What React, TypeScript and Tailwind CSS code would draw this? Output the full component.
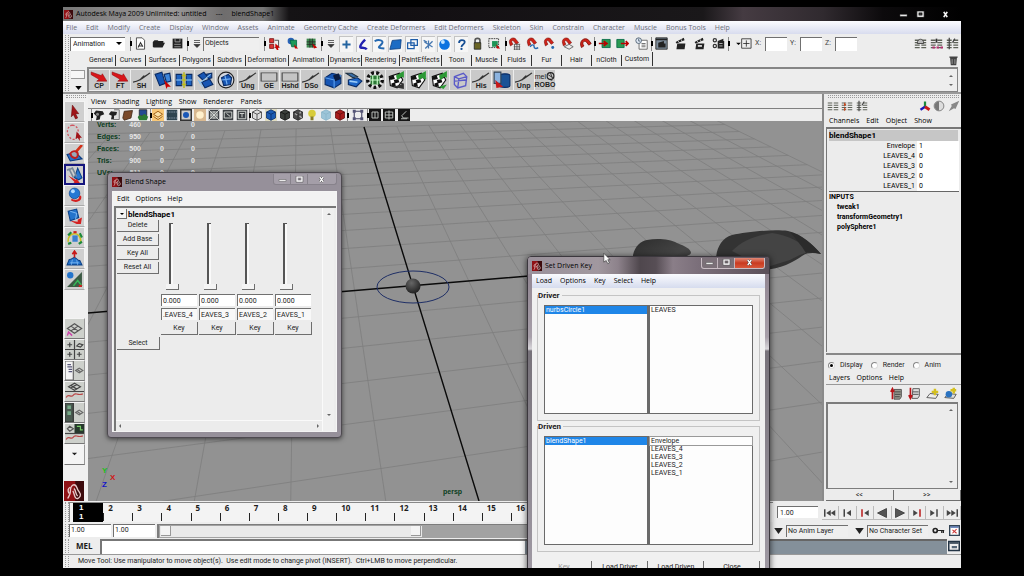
import React from "react";

type Kids = { children?: React.ReactNode };

const UI = "font-[Roboto,'Liberation_Sans',sans-serif] text-[7px] leading-[9px]";
const MENU = "font-['Open_Sans','Noto_Sans',sans-serif] text-[7px] leading-[10px]";
const INSET = "border-t border-l border-[#707070] border-b-0 border-r-0";
const RAISED = "border-r border-b border-[#6e6e6e]";

function Icon({ children, className = "size-[13px]" }: Kids & { className?: string }) {
  return (
    <svg viewBox="0 0 16 16" className={`block shrink-0 ${className}`} fill="none" aria-hidden="true">
      {children}
    </svg>
  );
}

function Tool({ label, children, className = "" }: Kids & { label: string; className?: string }) {
  return (
    <button type="button" aria-label={label} className={`flex items-center justify-center shrink-0 ${className}`}>
      {children}
    </button>
  );
}

function Sep() {
  return (
    <span className="flex h-[14px] w-px shrink-0 flex-col items-center justify-center bg-[#888]">
      <span className="h-[5px] w-[2px] shrink-0 bg-black" />
    </span>
  );
}

function Handle() {
  return <span className="my-[1px] w-[4px] shrink-0 self-stretch border-x border-dotted border-[#999]" />;
}

function MenuBar({ items, className = "" }: { items: string[]; className?: string }) {
  return (
    <nav className={`flex items-center whitespace-nowrap ${MENU} ${className}`}>
      {items.map((m) => (
        <button type="button" key={m}>{m}</button>
      ))}
    </nav>
  );
}

function MayaLogo({ className = "size-[11px]" }: { className?: string }) {
  return (
    <Icon className={className}>
      <rect width="16" height="16" fill="#8f1216" />
      <rect x="9" width="7" height="16" fill="#3c0a0c" />
      <path d="M3 14c1-2 2-3 2-5 0-3 1-6 3-6s2 2 3 4 3 3 2 5-3 3-4 1-1-4-2-5M5 5c-2 1-2 3-1 5M8 6c2 2 1 5 3 6" stroke="#e8caca" strokeWidth="1.1" />
    </Icon>
  );
}

/* ---------- status line icons ---------- */

const fileIcons: [string, React.ReactNode][] = [
  ["New scene", <><path d="M3 1h7l3 3v11H3z" fill="#fff" stroke="#333" /><path d="M5 13l3-6 3 5M5 11h6" stroke="#333" strokeWidth="1.3" /></>],
  ["Open scene", <path d="M1 12V6l2-2h4l1 1h6v2l2 0-3 6H2z" fill="#222" />],
  ["Save scene", <><path d="M2 2h12v12H2z" fill="#222" /><path d="M5 2v4h6V2M4 9h8M4 12h8" stroke="#aaa" /></>],
];

const maskIcons: [string, React.ReactNode][] = [
  ["Select by hierarchy", <><path d="M2 2h5v5H2zM2 9h5v5H2z" fill="#d33" stroke="#711" /><path d="M8 4h5v9H8" stroke="#333" /><path d="M9 8l6 5-3 0 1 3-2 0-2-3z" fill="#c00" /></>],
  ["Select by object", <><circle cx="6" cy="5" r="4" fill="#2a62b8" /><path d="M5 4h8v8H7z" fill="#1c9a58" stroke="#064" /><path d="M10 9l5 5-4 0z" fill="#c00" /></>],
  ["Select by component", <><path d="M2 2h11v11H2z" fill="#3e8a50" /><path d="M2 6h11M2 9h11M6 2v11M9 2v11" stroke="#222" /><path d="M9 8l6 5-4 1z" fill="#c00" /></>],
];

const pickIcons: [string, React.ReactNode][] = [
  ["Points", <path d="M8 3v10M3 8h10" stroke="#2464a0" strokeWidth="2.400" />],
  ["Joints", <path d="M10 2C6 6 4 9 4 11s6 0 8 3" stroke="#2222b0" strokeWidth="3" />],
  ["Curves", <path d="M2 4c5-3 12-1 9 3S3 12 14 13" stroke="#2468b0" strokeWidth="2.4" />],
  ["Surfaces", <path d="M4 3l11-1-1 11L1 14z" fill="#1d6cc4" stroke="#0c3f80" />],
  ["Deformers", <path d="M2 6h8v7H2zM6 2h8v7H6z" stroke="#1d5ca8" strokeWidth="1.5" />],
  ["Dynamics", <path d="M8 3v10M3 5l10 6M13 4L4 13M2 3l4 2" stroke="#4878b0" strokeWidth="1.6" />],
  ["Rendering", <><circle cx="8" cy="8" r="6.5" fill="#0d73e0" /><circle cx="6" cy="5" r="2.4" fill="#bfe3ff" /></>],
  ["Miscellaneous", <><path d="M5 6c0-5 7-4 7-1 0 3-4 3-4 6" stroke="#174f94" strokeWidth="2.2" /><circle cx="8" cy="13.500" r="1.400" fill="#174f94" /></>],
  ["Lock selection", <><path d="M5 8V4c0-3 6-3 6 0v4" stroke="#555" strokeWidth="2" /><path d="M4 7h8v8H4z" fill="#6a6424" stroke="#222" /></>],
  ["Highlight selection", <><path d="M1 2h12v11H1z" stroke="#222" strokeDasharray="2 1" /><path d="M5 5h7v7H5z" fill="#1d9456" /><path d="M10 9l5 5-4 0z" fill="#c00" /></>],
];

const magnet = <path d="M2 8C0 2 7-1 10 3l3 4-3 2-3-4C5 3 4 5 5 7l1 2-3 2z" fill="#cf2318" stroke="#7a0d08" strokeWidth=".7" />;
const snapIcons: [string, React.ReactNode][] = [
  ["Snap to grids", <>{magnet}<path d="M7 9h8M7 12h8M7 15h8M8 9v7M11 9v7M14 9v7" stroke="#555" /></>],
  ["Snap to curves", <>{magnet}<path d="M5 12c3-4 5-2 5 0s2 3 5 1" stroke="#2468b0" strokeWidth="1.8" /></>],
  ["Snap to points", <>{magnet}<circle cx="12" cy="13" r="1.8" fill="#2468b0" /></>],
  ["Snap to view planes", <>{magnet}<path d="M4 12l6-3 5 3-5 3z" stroke="#555" /></>],
  ["Make live", <path d="M3 13C-1 5 7-1 12 4l3 4-3 2-3-4c-3-2-6 1-3 5z" fill="#cf2318" stroke="#7a0d08" />],
];

const histIcons: [string, React.ReactNode][] = [
  ["Inputs", <><path d="M5 3h10v10H5z" fill="#2a9a52" stroke="#064" /><path d="M1 8h8M7 5l4 3-4 3" stroke="#b00" strokeWidth="2" /></>],
  ["Outputs", <><path d="M1 3h9v10H1z" fill="#2a9a52" stroke="#064" /><path d="M6 8h8M12 5l3 3-3 3" stroke="#b00" strokeWidth="2" /></>],
  ["Construction history", <><path d="M5 4h10v11H5z" fill="#fff" stroke="#555" /><path d="M8 8h5M8 10h5M8 12h5" stroke="#555" /><circle cx="4.500" cy="4.500" r="3.500" fill="#dfe8f4" stroke="#456" /><path d="M4.500 2v3h2" stroke="#456" /></>],
];

const clap = <><path d="M2 6l10-5 1 3-10 4zM4 8h10l-1 7H3z" fill="#222" /><path d="M5 5l2 2M9 3l1 3" stroke="#ddd" /></>;
const renderIcons: [string, React.ReactNode][] = [
  ["Render view", <><path d="M1 1h14v14H1z" fill="#7d8c9a" stroke="#222" /><path d="M1 3h14" stroke="#222" strokeWidth="2" /><path d="M4 7l7-2v3h2v5H4z" fill="#222" /></>],
  ["Render frame", clap],
  ["IPR render", <>{clap}<path d="M6 11h5" stroke="#eee" strokeWidth="2" /></>],
  ["Render settings", <><circle cx="3.500" cy="4" r="2" stroke="#333" strokeWidth="1.5" /><circle cx="3.500" cy="11" r="2" stroke="#333" strokeWidth="1.5" /><path d="M7 5l7-3v3h1v9H7z" fill="#222" /><path d="M9 8h4M9 11h4" stroke="#ccc" /></>],
];

const lines = <path d="M1 4h6M9 4h6M1 7h6M9 7h6M1 10h6M9 10h6M1 13h6M9 13h6" stroke="#5e6258" strokeWidth="1.6" />;
const sideIcons: [string, React.ReactNode][] = [
  ["Attribute editor", <>{lines}<path d="M4 8c0-7 8-7 8 0z" fill="#bbb" stroke="#333" /></>],
  ["Tool settings", <>{lines}<path d="M3 13h3M8 13h3M13 13h3" stroke="#b3306e" strokeWidth="2.500" /><path d="M8 2v5" stroke="#333" strokeWidth="2" /></>],
  ["Channel box", <>{lines}<path d="M4 1v14M11 2l-3 5" stroke="#444" strokeWidth="1.5" /></>],
];

function IconGroup({ icons, className, size = "size-[13px]", boxed = false }: { icons: [string, React.ReactNode][]; className: string; size?: string; boxed?: boolean }) {
  return (
    <div className={`flex shrink-0 items-center justify-around ${className}`}>
      {icons.map(([label, art]) => (
        <Tool key={label} label={label} className={boxed ? "h-[16px] border-t border-l border-[#c4c4c4] bg-[#f6f6f6]" : ""}>
          <Icon className={size}>{art}</Icon>
        </Tool>
      ))}
    </div>
  );
}

function Chevrons() {
  return (
    <Icon className="size-[8px]">
      <path d="M2 1h12M2 5h12M2 9h12l-6 6z" stroke="#333" strokeWidth="1.500" fill="#333" />
    </Icon>
  );
}

function Coord({ axis }: { axis: string }) {
  return (
    <label className="flex items-center gap-[4px]">
      <span>{axis}:</span>
      <input className={`h-[14px] w-[22px] bg-white ${INSET}`} />
    </label>
  );
}

function StatusLine() {
  return (
    <div className={`flex h-[19px] shrink-0 items-center pl-[2px] ${UI}`}>
      <Handle />
      <div className="relative ml-px flex h-[14px] w-[55px] shrink-0 items-center">
        <select aria-label="Menu set" className={`h-full w-full appearance-none bg-white pl-[2px] ${INSET}`}>
          <option>Animation</option>
        </select>
        <svg viewBox="0 0 8 4" className="pointer-events-none absolute right-[3px] h-[3px] w-[6px]" aria-hidden="true"><path d="M0 0h8L4 4z" fill="#000" /></svg>
      </div>
      <span className="w-[5px] shrink-0" />
      <Sep />
      <IconGroup icons={fileIcons} className="w-[56px]" />
      <Sep />
      <div className="flex w-[76px] shrink-0 items-center gap-[2px] pl-[5px]">
        <Chevrons />
        <input aria-label="Selection mask" defaultValue="Objects" className={`h-[14px] w-[56px] bg-[#efefef] pl-[1px] pb-[3px] ${INSET}`} />
      </div>
      <Sep />
      <IconGroup icons={maskIcons} className="w-[56px]" />
      <Sep />
      <div className="flex w-[183px] shrink-0 items-center pl-[5px]">
        <Chevrons />
        <IconGroup icons={pickIcons.slice(0, 8)} boxed className="ml-[3px] w-[131px]" />
        <IconGroup icons={pickIcons.slice(8)} className="w-[34px]" />
      </div>
      <Sep />
      <IconGroup icons={snapIcons} className="w-[88px]" />
      <Sep />
      <IconGroup icons={histIcons} className="w-[56px]" />
      <Sep />
      <IconGroup icons={renderIcons} className="w-[76px]" />
      <Sep />
      <Tool label="Input mode" className="ml-[7px]">
        <svg viewBox="0 0 20 14" className="h-[11px] w-[16px]" fill="none" aria-hidden="true">
          <path d="M0 6h6l-3 3z" fill="#000" /><path d="M7 1h12v12H7zM13 3v8M9 7h8" stroke="#222" />
        </svg>
      </Tool>
      <div className="ml-[3px] flex gap-[3px] text-[#444]">
        <Coord axis="X" />
        <Coord axis="Y" />
        <Coord axis="Z" />
      </div>
      <IconGroup icons={sideIcons} className="ml-auto w-[49px]" />
    </div>
  );
}

/* ---------- shelf ---------- */

const shelfTabs: [string, string][] = [
  ["General", "w-[29px]"], ["Curves", "w-[30px]"], ["Surfaces", "w-[34px]"], ["Polygons", "w-[34px]"],
  ["Subdivs", "w-[32px]"], ["Deformation", "w-[43px]"], ["Animation", "w-[40px]"], ["Dynamics", "w-[33px]"],
  ["Rendering", "w-[38px]"], ["PaintEffects", "w-[42px]"], ["Toon", "w-[30px]"], ["Muscle", "w-[30px]"],
  ["Fluids", "w-[30px]"], ["Fur", "w-[30px]"], ["Hair", "w-[30px]"], ["nCloth", "w-[30px]"], ["Custom", "w-[31px]"],
];

const redArrow = <path d="M1 1l9 4 1-2 4 8-9 0 2-2-7-5z" fill="#d8161a" stroke="#8e0a0c" strokeWidth=".5" />;
const bone = <path d="M0 12c6-1 8-4 15-10M6 10l4-5" stroke="#333" strokeWidth="1.3" />;
const frameBox = <path d="M1 2h14v9H1z" fill="#c4c4c4" stroke="#444" />;
const blueBox = <><path d="M1 6l6-4 8 2v7l-6 4-8-3z" fill="#1756b4" stroke="#0a2c66" /><path d="M1 6l8 2 6-4M9 8v7" stroke="#5ba0ee" /></>;
const checker = <><path d="M2 5l9-3 3 6-5 7-6-2z" fill="#fff" stroke="#111" /><path d="M2 5l4-1 1 3-4 1zM9 3l2-1 2 4-3 1zM6 8l4-1 1 3-4 1zM4 11l3-1 1 4-4-1z" fill="#111" /></>;
const greenArrow = <path d="M8 4l7-4v6l-2-1-4 3z" fill="#2d9a36" />;

const shelf: [string, React.ReactNode][] = [
  ["CP", redArrow], ["FT", redArrow], ["SH", bone],
  ["", <><path d="M1 3l6-2 3 10-5 2z" fill="#1756b4" stroke="#0a2c66" /><path d="M9 3l5-1 1 7-4 1z" fill="#3d86dc" stroke="#0a2c66" /><path d="M9 8l6 6-3 0-1 2z" fill="#c00" /></>],
  ["", <><path d="M1 3h5v10H1zM10 3h5v10h-5z" fill="#1d62c0" stroke="#0a2c66" /><path d="M1 8h14" stroke="#8cc4f4" /><path d="M8 1v14M6 4h4M6 8h4M6 12h4" stroke="#b8b820" strokeWidth="1.4" /></>],
  ["", <><path d="M2 4l5-3 3 4-4 3zM5 10l7-3 3 5-7 3zM9 3l5-1 0 4-3 1z" fill="#1756b4" stroke="#0a2c66" /><path d="M3 11l10-8M2 8l4 6" stroke="#8cc4f4" /></>],
  ["", <><circle cx="8" cy="8" r="7" stroke="#222" fill="#d4d8e0" /><path d="M4 6l6-3 3 3-1 6-6 1z" fill="#1756b4" stroke="#0a2c66" /><path d="M4 8l8-1M7 4l2 8" stroke="#73aef0" /></>],
  ["Ung", bone], ["GE", frameBox], ["Hshd", frameBox], ["DSo", bone],
  ["", <>{blueBox}<path d="M8 4l5-2 2 5-5 2z" fill="#0a1c40" /></>],
  ["", <><path d="M3 8l8-2 4 3-5 5-7-2z" fill="#1d66c8" stroke="#0a2c66" /><path d="M1 2l6 4 4-1-5-3z" fill="#3a6ea8" stroke="#234" /><path d="M4 9l7 1" stroke="#9cccf8" strokeWidth="1.5" /></>],
  ["", <><circle cx="8" cy="8" r="6.500" fill="#eee" stroke="#111" strokeWidth="3" strokeDasharray="2.500 2" /><path d="M4 4h8v8H4z" fill="#2d7a36" /><path d="M6 4v8M10 4v8M4 8h8" stroke="#cfc" /></>],
  ["", <>{checker}<path d="M5 14l8-2-2-2 4 1v5z" fill="#333" />{greenArrow}</>],
  ["", <>{checker}{greenArrow}<path d="M9 3l6 4" stroke="#2d9a36" strokeWidth="2" /></>],
  ["", <>{checker}<path d="M8 14l7-2-3 4z" fill="#2d9a36" />{greenArrow}</>],
  ["", <path d="M3 5l8-3 3 3-1 8-7 2-3-3zM3 5l4 2 7-2M7 7l-1 8M3 9l10-1" stroke="#5a5ac8" strokeWidth="1.2" />],
  ["His", bone],
  ["", <><path d="M6 4c0-2 9-2 9 0v9c0 2-9 2-9 0z" fill="#1a5296" stroke="#0a2c66" /><path d="M1 1h6v10H1z" fill="#8cb4e0" stroke="#345" /><path d="M2 8l7 6-6 1z" fill="#c81818" /></>],
  ["Unp", bone],
  ["ROBO", <><circle cx="8" cy="7" r="6" stroke="#222" strokeWidth="2" /><path d="M4 5l8 5M8 2l3 8M6 13l5 2" stroke="#222" strokeWidth="1.500" /></>],
];

function Shelf() {
  return (
    <div className="flex shrink-0 border-b-2 border-[#9a9a9a] pl-[2px]">
      <Handle />
      <div className="flex w-[18px] shrink-0 flex-col items-center pt-[17px]">
        <span className="h-[9px] w-[14px] border-b border-r border-t border-[#999] bg-[#f6f6f6]" />
        <svg viewBox="0 0 8 5" className="mt-[7px] h-[4px] w-[7px]" aria-hidden="true"><path d="M0 0h8L4 5z" fill="#000" /></svg>
      </div>
      <div className="min-w-0 flex-1">
        <div className="flex h-[14px] items-center">
          <div role="tablist" className={`flex h-full items-center ${UI}`}>
            {shelfTabs.map(([t, w]) => (
              <button type="button" role="tab" key={t} className={`shrink-0 border-r border-[#333] text-center leading-[11px] ${w} ${t === "Custom" ? "-mt-[2px] h-[14px]" : ""}`}>{t}</button>
            ))}
          </div>
          <Tool label="Delete shelf item" className="ml-auto mr-[2px]">
            <Icon className="size-[11px]"><path d="M3 4h10l-1 11H4zM2 2h12v2H2z" fill="#444" /><path d="M6 6v7M10 6v7" stroke="#bbb" /></Icon>
          </Tool>
        </div>
        <div className="mr-[3px] flex h-[25px] items-center justify-between border-2 border-r border-b border-[#858585]">
          <div className="grid h-[20px] w-[467px] grid-cols-[repeat(22,minmax(0,1fr))]">
            {shelf.map(([t, art], i) => (
              <button type="button" key={i} aria-label={t || "Shelf item"} className="mr-px flex min-w-0 flex-col items-center justify-center bg-[#c9c9c9]">
                {t === "" ? (
                  <Icon className="size-[18px]">{art}</Icon>
                ) : (
                  <>
                    {t === "ROBO" ? (
                      <span className="flex h-[11px] items-center font-['Liberation_Sans'] text-[7px] leading-[10px]">mel<Icon className="size-[9px]">{art}</Icon></span>
                    ) : (
                      <svg viewBox="0 0 16 13" preserveAspectRatio="none" className="h-[12px] w-[18px]" fill="none" aria-hidden="true">{art}</svg>
                    )}
                    <span className="-mt-[1px] font-['Liberation_Sans'] text-[7px] font-bold leading-[8px] text-[#222]">{t}</span>
                  </>
                )}
              </button>
            ))}
          </div>
          <div className="flex flex-col gap-[7px] pr-[4px]">
            <svg viewBox="0 0 6 3" className="h-[2px] w-[4px]"><path d="M0 3h6L3 0z" fill="#666" /></svg>
            <svg viewBox="0 0 6 3" className="h-[2px] w-[4px]"><path d="M0 0h6L3 3z" fill="#666" /></svg>
          </div>
        </div>
      </div>
    </div>
  );
}

/* ---------- tool box ---------- */

const redSwoosh = <path d="M5 13c6 3 11-1 9-5l-2 1c1 3-3 4-7 2z" fill="#d42020" />;
const persp = <path d="M2 8l6-4 6 4-6 4zM5 6l6 4M11 6l-6 4" stroke="#555" />;
const curveG = <path d="M1 13c2-4 4 1 6-2s3 1 8-1" stroke="#b44" />;
const tools: [string, React.ReactNode][] = [
  ["Select", <path d="M6 2l6 8-3 0 2 4-2 1-2-4-2 2z" fill="#a01418" stroke="#600" strokeWidth=".5" />],
  ["Lasso", <><path d="M6 1c-5 1-6 7-3 11s7 3 8-1 1-9-5-10z" stroke="#d05560" strokeDasharray="2 1.5" strokeWidth="1.2" /><path d="M10 7l5 6-2 0 0 3-2-3-2 1z" fill="#a01418" /></>],
  ["Paint select", <><path d="M1 9l8-2 6 6-11 2z" fill="#2b72c8" stroke="#0a3a80" /><path d="M15 0L9 7" stroke="#d43018" strokeWidth="2.500" /><path d="M4 8c3-4 8-2 7 2s-6 2-7-2z" stroke="#c02020" strokeWidth="1.800" fill="#9ab" /></>],
  ["Move", <><path d="M11 2l4 9-3 2-4-2z" fill="#2a78d0" stroke="#0c4288" /><path d="M1 4l2-1 4 8M4 3l2-1 4 8" stroke="#789" strokeWidth="1.500" /><path d="M2 9l7 4 1-1 3 4-6 0 1-1z" fill="#d42020" /></>],
  ["Rotate", <>{redSwoosh}<circle cx="8" cy="6" r="5" fill="#2478d4" stroke="#0c4288" strokeWidth=".6" /><circle cx="6.500" cy="4" r="1.8" fill="#b4dcff" /></>],
  ["Scale", <><path d="M2 3l8-2 2 8-8 3z" fill="#2474cc" stroke="#0c4288" /><path d="M4 3l6 2-1 6" stroke="#78b4f0" /><path d="M4 12l7 1 0-2 4-2-1 6-4 0z" fill="#d42020" /></>],
  ["Universal manipulator", <><path d="M2 12C1 3 14 1 14 12" stroke="#c8c020" strokeWidth="1.5" /><path d="M6 6h5v6H6z" fill="#3a80d0" /><path d="M2 6l3-3M13 4l2 4M2 14l3-1M12 14l3-2" stroke="#1c8a3a" strokeWidth="2" /><path d="M7 3h3" stroke="#c22" strokeWidth="2" /></>],
  ["Soft modification", <><path d="M1 14l2-5c3 0 3-2 5-2s2 3 5 3l2 4z" fill="#2474cc" stroke="#0c4288" /><path d="M4 12h8M6 9l-1 5M10 9l1 5" stroke="#78b4f0" strokeWidth=".8" /><path d="M8 7V2M6 4l2-3 2 3" stroke="#c81818" strokeWidth="1.5" /></>],
  ["Show manipulator", <><path d="M1 15L15 1v14z" fill="#3c5a44" /><circle cx="4" cy="4" r="3" fill="#2474cc" /><path d="M7 14l4-5 4 5" stroke="#35b858" strokeWidth="1.5" /><path d="M12 13h3v2h-3z" fill="#c22" /></>],
];
const layouts: [string, React.ReactNode][] = [
  ["Single perspective", <>{persp}<path d="M2 14l1-3 3 3" stroke="#c4a" strokeWidth="1.2" /></>],
  ["Four view", <path d="M8 0v16M0 8h16M4 2v4M2 4h4M4 10v4M2 12h4M12 10v4M10 12h4M10 5l2-2 3 1-2 2z" stroke="#444" />],
  ["Outliner and perspective", <><path d="M0 0h7v16H0z" fill="#f4f4f4" stroke="#666" /><path d="M2 3h3M2 5h4M3 7h3M3 9h3" stroke="#557" /><path d="M9 8l3-2 3 2-3 2zM10 7l3 2" stroke="#666" /></>],
  ["Perspective and graph", <><path d="M3 4l5-3 5 3-5 3zM5 3l5 3M10 2L5 5M0 8h16" stroke="#444" />{curveG}</>],
  ["Hypershade", <><path d="M0 0h7v16H0z" fill="#4a5a50" stroke="#333" /><path d="M2 2h3v3H2zM2 7h3v3H2z" fill="#7a8" /><path d="M9 8l3-2 3 2-3 2zM10 7l3 2" stroke="#666" /></>],
  ["Three view", <><path d="M8 0h8v8H8z" fill="#26382c" /><path d="M2 4l2-2 3 2-3 2z" stroke="#555" /><path d="M10 2h3v3h2" stroke="#7c6" /><path d="M0 8h16" stroke="#444" />{curveG}</>],
  ["More layouts", <path d="M7 7h2l-1 1z" fill="#222" stroke="#222" />],
];

function ToolBox() {
  return (
    <aside className="flex w-[25px] shrink-0 flex-col bg-[#f0f0f0] pl-px">
      <span className="mx-[2px] mt-px mb-[3px] h-[3px] border-y border-dotted border-[#999]" />
      {tools.map(([t, art]) => (
        <Tool key={t} label={t} className={`h-[21px] w-[21px] border bg-[#cfcfcf] ${t === "Move" ? "border-2 border-[#15157e]" : "border-[#f4f4f4] border-b-[#aaa]"}`}>
          <Icon className="size-[17px]">{art}</Icon>
        </Tool>
      ))}
      <div className="mt-[28px] flex flex-col">
        {layouts.map(([t, art]) => (
          <Tool key={t} label={t} className={`h-[21px] w-[21px] border border-[#f4f4f4] border-b-[#777] border-r-[#999] ${t === "More layouts" ? "bg-[#f4f4f4]" : "bg-[#cdd0cb]"}`}>
            <Icon className="size-[19px]">{art}</Icon>
          </Tool>
        ))}
      </div>
      <MayaLogo className="mt-auto size-[20px]" />
    </aside>
  );
}

/* ---------- viewport ---------- */

const cube = (fill: string, line: string) => (
  <><path d="M2 4l6-3 6 3v8l-6 3-6-3z" fill={fill} stroke={line} /><path d="M2 4l6 3 6-3M8 7v8" stroke={line} /></>
);
const dark = (d: string) => <><path d="M1 1h14v14H1z" fill="#3c4044" /><path d={d} stroke="#d8dcd8" strokeWidth="1.2" /></>;
const black = (d: string) => <><path d="M0 0h16v16H0z" fill="#161616" /><path d={d} stroke="#c4c8c4" strokeWidth="1.2" /></>;

const camIcons: [string, React.ReactNode][] = [
  ["Select camera", <><path d="M1 6l3-4 9 1 2 4-5 2-1 5-5 1 1-5z" fill="#222" /><circle cx="6" cy="7" r="2" fill="#888" /></>],
  ["Camera attributes", <><path d="M8 1h7v13H6" stroke="#555" fill="#ddd" /><path d="M1 7l3-4 8 1-1 4-3 1v4l-4 1 1-5z" fill="#222" /></>],
  ["Bookmarks", <path d="M3 3l11-1-2 10-9 3-2-3z" fill="#7a4a2a" stroke="#3a2414" />],
  ["Image plane", <><path d="M3 1h10v8H3z" fill="#224a92" stroke="#222" /><path d="M1 11c3-6 5 1 7-3s5 2 7 2l-2 5H3z" fill="#2a7a34" /></>],
];
const viewIcons: [string, React.ReactNode][] = [
  ["Grid", <><path d="M0 0h16v16H0z" fill="#f8c878" /><path d="M2 7l6-4 6 4-6 4zM2 10l6 4 6-4" stroke="#9a5a10" strokeWidth="1.2" fill="#fbe2a8" /></>],
  ["Film gate", <><path d="M1 1h14v14H1z" fill="#2e4450" /><path d="M1 4h14M1 12h14" stroke="#9ab" strokeDasharray="2 1" /></>],
  ["Resolution gate", <><path d="M1 1h14v14H1z" fill="#ccc" stroke="#333" strokeWidth="2" /><circle cx="8" cy="8" r="4" fill="#1a58b8" /></>],
  ["Gate mask", <><path d="M0 0h16v16H0z" fill="#d8b890" /><circle cx="8" cy="8" r="5" fill="#fff0cc" /></>],
  ["Field chart", dark("M1 1l14 14M15 1L1 15M3 8h10M8 3v10M4 4h8v8H4z")],
  ["Safe action", dark("M3 4h10v8H3zM6 6l5 4")],
  ["Safe title", dark("M3 3h10v10H3zM5 6h6M8 6v5")],
];
const shadeIcons: [string, React.ReactNode][] = [
  ["Wireframe", cube("#ddd", "#333")],
  ["Smooth shade", <><path d="M0 0h16v16H0z" fill="#e0dcc0" />{cube("#1c5cb4", "#0a2c66")}</>],
  ["Wireframe on shaded", cube("#3a3e3a", "#111")],
  ["Textured", <>{cube("#4a4a4a", "#222")}<path d="M4 6l3 2M10 9l3 3M10 6l2-2" stroke="#aaa" strokeWidth="2" /></>],
  ["Lights", <><circle cx="8" cy="6" r="5" fill="#d8cc3a" /><path d="M6 10h4v5H6z" fill="#887c2a" /></>],
  ["Shadows", cube("#9cc4d8", "#8ab4c8")],
  ["High quality", cube("#a81c1c", "#5c0c0c")],
];
const isoIcons: [string, React.ReactNode][] = [["Isolate select", <><path d="M3 3h10v10H3z" stroke="#446" strokeWidth="1.5" /><path d="M1 1h4v4H1zM11 1h4v4h-4zM1 11h4v4H1zM11 11h4v4h-4z" fill="#557" /></>]];
const xrayIcons: [string, React.ReactNode][] = [
  ["X-ray", black("M4 4h8v8H4zM8 4v8")],
  ["X-ray joints", black("M3 4h10v8H3zM3 8h10M8 2v12")],
  ["Component editor", black("M11 3L5 9l2 3h7M4 13h8")],
];

const project = (x: number, z: number) => {
  const w = 1 + 0.021 * x + 0.063 * z;
  return [(413 + 65.8 * x + 18.85 * z) / w, (286 + 1.16 * x - 5.25 * z) / w];
};

function gridPath() {
  let d = "";
  const add = (a: number[], b: number[]) => {
    d += `M${a[0].toFixed(1)} ${a[1].toFixed(1)}L${b[0].toFixed(1)} ${b[1].toFixed(1)}`;
  };
  for (let i = -12; i <= 12; i++) {
    if (i === 0) continue;
    add(project(i, 12), project(i, i < -6 ? -8 : -11));
    add(project(i < -8 ? -6 : -12, i), project(12, i));
  }
  return d;
}

const hud: [string, number][] = [["Verts:", 460], ["Edges:", 950], ["Faces:", 500], ["Tris:", 900], ["UVs:", 511]];

function Viewport() {
  return (
    <section className="flex min-w-0 flex-1 flex-col border-r-2 border-[#8a8a8a]">
      <MenuBar items={["View", "Shading", "Lighting", "Show", "Renderer", "Panels"]} className="h-[14px] w-[174px] shrink-0 justify-between pt-px pl-[3px] text-black" />
      <div className="flex h-[13px] shrink-0 items-center border-t border-[#808080] pl-[3px]">
        <Sep />
        <IconGroup icons={camIcons} size="size-[12px]" className="w-[58px]" />
        <Sep />
        <IconGroup icons={viewIcons} size="size-[12px]" className="w-[98px]" />
        <Sep />
        <IconGroup icons={shadeIcons} size="size-[12px]" className="w-[97px]" />
        <Sep />
        <IconGroup icons={isoIcons} size="size-[12px]" className="w-[19px]" />
        <Sep />
        <IconGroup icons={xrayIcons} size="size-[12px]" className="w-[43px]" />
      </div>
      <div className="relative min-h-0 flex-1 overflow-hidden bg-[#929292]">
        <svg viewBox="88 121 734 380" preserveAspectRatio="xMinYMin slice" className="absolute inset-0 size-full" fill="none" aria-hidden="true">
          <defs>
            <linearGradient id="leaf" x1="0" y1="0" x2="1" y2="1"><stop stopColor="#2c2c2c" /><stop offset=".6" stopColor="#454545" /><stop offset="1" stopColor="#333" /></linearGradient>
            <radialGradient id="ball" cx=".4" cy=".3" r=".7"><stop stopColor="#666" /><stop offset="1" stopColor="#222" /></radialGradient>
          </defs>
          <path d={gridPath()} stroke="#7e7e7e" strokeWidth="0.800" />
          <path d="M88 313L600 270M364 127L479 501" stroke="#0a0a0a" strokeWidth="1.400" />
          <ellipse cx="413" cy="287" rx="36" ry="16" stroke="#1f2f66" />
          <circle cx="413" cy="286" r="7.500" fill="url(#ball)" />
          <path d="M633 272v-17c2-9 8-14 14-15 10-2 23-1 30 3 8 3 14 6 14 10-2 4-12 5-22 8-12 4-24 10-36 11z" fill="url(#leaf)" />
          <path d="M716 258c1-11 6-20 16-23 14-3 40-6 56-4 14 3 25 14 33 23-6-1-13-2-19 2-8 6-22 13-38 14z" fill="#333" />
          <path d="M732 251c10-10 22-15 40-18 16 2 28 9 40 19-8 0-14 4-22 8l-26 8z" fill="#444" />
          <path d="M790 232c12 3 22 12 31 22-5-1-11-2-15-1-5-8-10-14-16-21z" fill="#2b2b2b" />
        </svg>
        <table className="absolute -top-[2px] left-[9px] border-collapse text-[7px] font-bold leading-[12px] font-['Liberation_Sans']">
          <tbody>
            {hud.map(([k, v]) => (
              <tr key={k} className="h-[12px] text-[#e6e6e6]">
                <th className="w-[26px] p-0 text-left text-[#0b3d1c]">{k}</th>
                <td className="w-[18px] p-0 text-right">{v}</td>
                <td className="w-[23px] p-0 text-right">0</td>
                <td className="w-[31px] p-0 text-right">0</td>
              </tr>
            ))}
          </tbody>
        </table>
        <div className="absolute bottom-[13px] left-[14px] grid grid-cols-[8px_8px] text-[8px] font-bold leading-[7px] font-['Liberation_Sans']">
          <span className="text-[#18c018]">Y</span><span />
          <span /><span className="text-[#d01818]">X</span>
          <span className="text-[#1414c8]">Z</span><span />
        </div>
        <span className="absolute bottom-[5px] left-[355px] text-[7px] font-bold leading-[9px] text-[#0b3d1c] font-['Liberation_Sans']">persp</span>
      </div>
    </section>
  );
}

/* ---------- channel box and layers ---------- */

function ChannelBox() {
  return (
    <aside className="flex w-[137px] shrink-0 flex-col bg-[#ececec] pl-[2px]">
      <span className="mx-[2px] mt-px h-[3px] shrink-0 border-y border-dotted border-[#999]" />
      <div className="flex h-[15px] shrink-0 items-center justify-between">
        <IconGroup size="size-[12px]" className="w-[43px]" icons={[
          ["Channel list", lines],
          ["Channels and layers", <>{lines}<path d="M4 3l3 3-3 3zM4 10l3 2-3 3z" fill="#c84a20" /></>],
          ["Layers list", <>{lines}<path d="M4 1v14M11 2l-3 5" stroke="#444" strokeWidth="1.5" /></>],
        ]} />
        <IconGroup className="w-[43px]" size="size-[12px]" icons={[
          ["Manipulator", <><path d="M8 9V2" stroke="#1c8a3a" strokeWidth="3" /><path d="M8 9l-6 4" stroke="#1818b8" strokeWidth="3" /><path d="M8 9l6 4" stroke="#c81818" strokeWidth="4" /></>],
          ["Speed", <><circle cx="8" cy="8" r="6.500" fill="#ddd" stroke="#666" /><path d="M8 2a6 6 0 000 12z" fill="#777" /></>],
          ["Hyperbolic", <path d="M1 15l4-7-1-2L15 1l-5 11-2-1z" fill="#888" />],
        ]} />
      </div>
      <MenuBar items={["Channels", "Edit", "Object", "Show"]} className="mt-px h-[13px] w-[106px] shrink-0 justify-between pl-[3px] pt-px text-black" />
      <div className={`min-h-0 flex-1 border-t-2 border-l border-[#777] pt-px pl-[2px] text-black ${UI}`}>
        <div className="mr-[3px] bg-[#c6c6c6] text-[8px] font-bold leading-[11px]">blendShape1</div>
        <table className="w-[130px] border-collapse border-b border-[#666] leading-[10px]">
          <tbody>
            {[["Envelope", 1], ["LEAVES_4", 0], ["LEAVES_3", 0], ["LEAVES_2", 0], ["LEAVES_1", 0]].map(([k, v]) => (
              <tr key={k} className="h-[10px]">
                <th className="w-[88px] p-0 pr-[2px] text-right font-normal">{k}</th>
                <td className="bg-white p-0 pl-[2px]">{v}</td>
              </tr>
            ))}
          </tbody>
        </table>
        <div className="font-bold leading-[10px]">
          <div>INPUTS</div>
          <ul className="pl-[8px]"><li>tweak1</li><li>transformGeometry1</li><li>polySphere1</li></ul>
        </div>
      </div>
      <div className="mt-px shrink-0 border-t-2 border-[#888] pt-[3px]">
        <div className={`flex h-[14px] items-center gap-[8px] pl-[2px] ${UI}`}>
          {["Display", "Render", "Anim"].map((r) => (
            <label key={r} className="flex items-center gap-[5px]">
              <input type="radio" name="layerMode" defaultChecked={r === "Display"} className="flex size-[7px] appearance-none items-center justify-center rounded-full border border-[#888] border-b-[#ddd] border-r-[#ddd] bg-white checked:before:size-[3px] checked:before:rounded-full checked:before:bg-black" />
              {r}
            </label>
          ))}
        </div>
        <MenuBar items={["Layers", "Options", "Help"]} className="h-[12px] w-[78px] justify-between pl-[3px] text-black" />
        <div className="flex h-[18px] items-center justify-end border-t border-[#999] pr-[2px]">
          <IconGroup className="w-[72px]" icons={[
            ["Move layer up", <><path d="M5 3h9v9l-2 3H5z" fill="#9a9a90" stroke="#444" /><path d="M6 6h7M6 9h7M6 12h6" stroke="#333" /><path d="M3 15V4M1 6l2-4 2 4" stroke="#b81418" strokeWidth="2" /></>],
            ["Move layer down", <><path d="M6 2h8v9l-2 3H5z" fill="#ddd" stroke="#444" /><path d="M6 6h7M6 9h7" stroke="#333" /><path d="M3 1v12M1 10l2 4 2-4" stroke="#b81418" strokeWidth="2" /></>],
            ["New layer", <><path d="M1 13l4-5 10 1-3 5z" fill="#eee" stroke="#444" /><path d="M11 2v8M7 6h8" stroke="#d4c020" strokeWidth="3" /></>],
            ["New layer from selected", <><path d="M1 13l4-5 10 1-3 5z" fill="#ddd" stroke="#444" /><circle cx="6" cy="9" r="4" fill="#2a72c0" /><path d="M12 1v7M8 4h7" stroke="#d4c020" strokeWidth="3" /></>],
          ]} />
        </div>
      </div>
      <div className="mr-[3px] flex h-[87px] shrink-0 flex-col items-end justify-between border-2 border-r border-b border-[#7c7c7c] px-[4px] py-[5px]">
        <svg viewBox="0 0 6 3" className="h-[2px] w-[4px]"><path d="M0 3h6L3 0z" fill="#666" /></svg>
        <svg viewBox="0 0 6 3" className="h-[2px] w-[4px]"><path d="M0 0h6L3 3z" fill="#666" /></svg>
      </div>
      <div className={`mt-px grid h-[11px] shrink-0 grid-cols-2 ${UI}`}>
        <button type="button" className={RAISED}>&lt;&lt;</button>
        <button type="button" className={RAISED}>&gt;&gt;</button>
      </div>
    </aside>
  );
}

/* ---------- bottom rows ---------- */

const tri = (x: number, flip = false) => <path d={flip ? `M${x} 4v8l6-4z` : `M${x + 6} 4v8l-6-4z`} fill="#444" />;
const bar = (x: number, c = "#444") => <path d={`M${x} 3v10`} stroke={c} strokeWidth="2" />;
const playIcons: [string, React.ReactNode][] = [
  ["Go to start", <>{bar(1)}{tri(3)}{tri(9)}</>],
  ["Step back frame", <>{bar(3)}{tri(6)}</>],
  ["Step back key", <>{bar(4, "#b81818")}{tri(7)}</>],
  ["Play backwards", <path d="M14 2v12L2 8z" fill="#555" stroke="#333" />],
  ["Play forwards", <path d="M2 2v12l12-6z" fill="#555" stroke="#333" />],
  ["Step forward key", <>{tri(3, true)}{bar(12, "#b81818")}</>],
  ["Step forward frame", <>{tri(3, true)}{bar(12)}</>],
  ["Go to end", <>{tri(1, true)}{tri(7, true)}{bar(15)}</>],
];

function Timeline() {
  return (
    <div className="flex h-[22px] shrink-0 items-stretch pl-[2px]">
      <Handle />
      <ol className="mt-px mb-px flex min-w-0 flex-1 border-t border-l border-[#888] bg-[#f3f3f3] pl-[3px] font-['Open_Sans',sans-serif] text-[8px] font-bold leading-[9px]">
        {Array.from({ length: 24 }, (_, i) => (
          <li key={i} className={`flex min-w-0 flex-1 flex-col ${i === 0 ? "bg-black pl-[6px] font-['Liberation_Sans'] text-white" : "pl-[5px]"}`}>
            <span>{i + 1}</span>
            {i === 0 ? <span>1</span> : <span className="-ml-[5px] mt-[1px] h-[8px] w-px bg-[#222]" />}
          </li>
        ))}
      </ol>
      <input aria-label="Current time" defaultValue="1.00" className={`ml-[4px] mt-[5px] h-[12px] w-[41px] bg-white pl-[2px] ${INSET} ${UI}`} />
      <div className="ml-[4px] grid w-[139px] grid-cols-8 items-center pt-[2px]">
        {playIcons.map(([t, art]) => (
          <Tool key={t} label={t} className="h-[14px] border-r border-b border-[#bbb]"><Icon className="size-[12px]">{art}</Icon></Tool>
        ))}
      </div>
    </div>
  );
}

function DownMark() {
  return <svg viewBox="0 0 10 7" className="h-[6px] w-[9px] shrink-0" aria-hidden="true"><path d="M0 0h10L5 7z" fill="#222" /></svg>;
}

function RangeRow() {
  return (
    <div className={`flex h-[15px] shrink-0 items-center pl-[2px] ${UI}`}>
      <Handle />
      <input aria-label="Playback start" defaultValue="1.00" className={`h-[13px] w-[42px] bg-white pb-[2px] pl-[1px] ${INSET}`} />
      <input aria-label="Animation start" defaultValue="1.00" className={`ml-[2px] h-[13px] w-[42px] bg-white pb-[2px] pl-[1px] ${INSET}`} />
      <div className="ml-[2px] flex h-[14px] min-w-0 flex-1 border-t border-l-2 border-[#7c7c7c] bg-[#a2a2a2] p-px">
        <div className="flex w-[262px] items-center justify-between bg-[#e9e9e9] px-px">
          <span className="size-[10px] border-r border-b border-[#999] bg-[#f4f4f4]" />
          <span className="size-[10px] border-r border-b border-[#999] bg-[#f4f4f4]" />
        </div>
      </div>
      <div className="ml-[4px] flex w-[187px] shrink-0 items-center gap-[3px]">
        <DownMark />
        <input aria-label="Animation layer" defaultValue="No Anim Layer" className={`h-[12px] w-[62px] bg-[#efefef] pl-[1px] ${INSET}`} />
        <span className="w-px" />
        <DownMark />
        <input aria-label="Character set" defaultValue="No Character Set" className={`h-[12px] w-[61px] bg-[#efefef] pl-[1px] ${INSET}`} />
        <Tool label="Auto key"><Icon className="h-[13px] w-[15px]"><circle cx="4" cy="8" r="2.500" stroke="#222" strokeWidth="2" /><path d="M7 8h8M12 8v3M14 8v3" stroke="#222" strokeWidth="1.500" /></Icon></Tool>
        <Tool label="Preferences"><Icon className="size-[11px]"><path d="M1 1h14v14H1z" fill="#fff" stroke="#345" strokeWidth="2" /><path d="M2 3h12" stroke="#46a" strokeWidth="2" /><path d="M5 12l6-6M5 7l6 5" stroke="#c33" strokeWidth="1.500" /></Icon></Tool>
      </div>
    </div>
  );
}

/* ---------- floating windows ---------- */

function Glyph({ kind }: { kind: "min" | "max" | "close" }) {
  return (
    <svg viewBox="0 0 12 8" className="h-[7px] w-[11px]" fill="none" aria-hidden="true">
      {kind === "min" && <path d="M2 4h8v2H2z" fill="#fff" stroke="#555" strokeWidth=".6" />}
      {kind === "max" && <path d="M3 1h6v5H3z" stroke="#fff" strokeWidth="1.600" />}
      {kind === "max" && <path d="M2 0h8v7H2zM5 3h2v1H5z" stroke="#555" strokeWidth=".6" />}
      {kind === "close" && <path d="M4 1l4 6M8 1L4 7" stroke="#444" strokeWidth="2.500" />}
      {kind === "close" && <path d="M4 1l4 6M8 1L4 7" stroke="#fff" strokeWidth="1.500" />}
    </svg>
  );
}

function BlendShapeWindow() {
  return (
    <section className="absolute top-[165px] left-[44px] flex h-[266px] w-[235px] flex-col rounded-[4px] border border-[#4e4a50] bg-[#96909a] px-[4px] pb-[5px] shadow-[0_1px_5px_rgba(0,0,0,0.6)]">
      <header className="flex h-[18px] shrink-0 items-center gap-[3px] pb-px">
        <MayaLogo className="size-[10px]" />
        <h2 className={`${MENU} text-black`}>Blend Shape</h2>
        <div className="mb-[4px] ml-auto flex h-[11px] rounded-b-[3px] border border-t-0 border-[#87828b] bg-[#a49ea8]">
          <button type="button" aria-label="Minimize" className="w-[17px] border-r border-[#87828b] pl-[3px]"><Glyph kind="min" /></button>
          <button type="button" aria-label="Maximize" className="w-[17px] border-r border-[#87828b] pl-[3px]"><Glyph kind="max" /></button>
          <button type="button" aria-label="Close" className="w-[28px] pl-[8px]"><Glyph kind="close" /></button>
        </div>
      </header>
      <div className="flex min-h-0 flex-1 flex-col border border-[#f4f4f4] bg-[#ececec]">
        <MenuBar items={["Edit", "Options", "Help"]} className="h-[14px] shrink-0 gap-[6px] bg-[#f2f2f2] pl-[4px] text-black" />
        <div className={`ml-px flex min-h-0 flex-1 border-t-2 border-l-2 border-[#777] ${UI}`}>
          <div className="flex min-w-0 flex-1 flex-col">
            <div className="flex min-h-0 flex-1 flex-col items-start pl-px">
              <div className="flex items-center gap-px pt-px">
                <button type="button" aria-label="Collapse" className={`flex h-[10px] w-[10px] items-center justify-center bg-[#f4f4f4] ${RAISED}`}>
                  <svg viewBox="0 0 6 3" className="h-[2px] w-[4px]"><path d="M0 0h6L3 3z" fill="#000" /></svg>
                </button>
                <b className="text-[8px] text-black">blendShape1</b>
              </div>
              <div className="flex">
                <div className="flex w-[44px] flex-col pt-px">
                  {["Delete", "Add Base", "Key All", "Reset All"].map((b) => (
                    <button type="button" key={b} className={`mb-[2px] h-[12px] w-[42px] ${RAISED}`}>{b}</button>
                  ))}
                </div>
                <div className="flex">
                  {[4, 3, 2, 1].map((n) => (
                    <div key={n} className="flex w-[38px] flex-col">
                      <div className="relative ml-[5px] mt-[4px] h-[67px] w-[14px]">
                        <span className="absolute top-0 left-[3px] h-[63px] w-[4px] border-t border-l-2 border-[#555] bg-[#fafafa]" />
                        <span className={`absolute bottom-0 left-0 h-[6px] w-[13px] bg-[#f4f4f4] ${RAISED}`} />
                        <input type="range" aria-label={`LEAVES_${n} weight`} defaultValue={0} className="absolute inset-0 size-full opacity-0 [writing-mode:vertical-lr] [direction:rtl]" />
                      </div>
                      <input aria-label={`LEAVES_${n} value`} defaultValue="0.000" className={`mt-[4px] h-[12px] w-[36px] bg-white pl-px ${INSET}`} />
                      <input aria-label={`Target ${n}`} defaultValue={n === 4 ? ".EAVES_4" : `EAVES_${n}`} className={`mt-[2px] h-[12px] w-[36px] bg-[#f8f8f8] leading-[11px] ${INSET} pl-px`} />
                      <button type="button" className={`mt-[2px] h-[13px] w-[37px] ${RAISED}`}>Key</button>
                    </div>
                  ))}
                </div>
              </div>
              <button type="button" className={`mt-[2px] h-[13px] w-[43px] ${RAISED}`}>Select</button>
            </div>
            <div className="flex h-[11px] shrink-0 items-center justify-between border-t border-[#fafafa] px-[3px]">
              <svg viewBox="0 0 3 6" className="h-[4px] w-[2px]"><path d="M3 0v6L0 3z" fill="#666" /></svg>
              <svg viewBox="0 0 3 6" className="h-[4px] w-[2px]"><path d="M0 0v6l3-3z" fill="#666" /></svg>
            </div>
          </div>
          <div className="mr-[2px] flex w-[12px] shrink-0 flex-col items-center justify-between border-l border-[#fafafa] bg-[#efefef] pt-[5px] pb-[15px]">
            <svg viewBox="0 0 6 3" className="h-[2px] w-[4px]"><path d="M0 3h6L3 0z" fill="#666" /></svg>
            <svg viewBox="0 0 6 3" className="h-[2px] w-[4px]"><path d="M0 0h6L3 3z" fill="#666" /></svg>
          </div>
        </div>
      </div>
    </section>
  );
}

function ListBox({ items, selected, focused, className = "" }: { items: string[]; selected?: boolean; focused?: boolean; className?: string }) {
  return (
    <ul className={`flex-1 border border-[#6a6a6a] bg-[#fdfdfd] leading-[8px] ${className}`}>
      {items.map((t, i) => (
        <li key={t} className={`h-[8px] pl-px ${selected ? "bg-[#1f86e8] text-white" : ""} ${focused && i === 0 ? "shadow-[0_0_0_1px_#999]" : ""}`}>{t}</li>
      ))}
    </ul>
  );
}

function Group({ title, left, right, focused }: { title: string; left: string; right: string[]; focused?: boolean }) {
  return (
    <fieldset className="h-[131px] min-w-0 shrink-0 border border-[#c4c4c4] px-[6px] pb-[7px] pt-[4px]">
      <legend className="-ml-[6px] pr-[2px] text-[8px] font-bold leading-[11px]">{title}</legend>
      <div className="flex h-[109px]">
        <ListBox items={[left]} selected />
        <ListBox items={right} focused={focused} className="border-l-2" />
      </div>
    </fieldset>
  );
}

function DrivenKeyWindow() {
  return (
    <section className="absolute top-[249px] left-[464px] flex h-[330px] w-[243px] flex-col rounded-[4px] border border-[#3c383e] bg-[linear-gradient(180deg,#8b7f8b_0,#a79fa9_80px,#d8d6da_92px,#77727a_94px,#a29ca6_100%)] px-[4px] shadow-[0_1px_6px_rgba(0,0,0,0.7)]">
      <header className="-mx-[4px] flex h-[17px] shrink-0 items-center gap-[3px] rounded-t-[3px] bg-[linear-gradient(90deg,#9a919b_0,#a1989f_70px,#8d828b_90px,#4f474d_112px,#574e55_128px,#8a7e88_145px,#7b6f7a_170px,#5a4f58_100%)] px-[4px]">
        <MayaLogo className="size-[10px]" />
        <h2 className={`${MENU} text-black`}>Set Driven Key</h2>
        <div className="mb-[5px] ml-auto flex h-[11px] overflow-hidden rounded-b-[3px] border border-t-0 border-[#c9bdc4] bg-[#7b7078]">
          <button type="button" aria-label="Minimize" className="w-[16px] border-r border-[#c0b4bb] pl-[2px]"><Glyph kind="min" /></button>
          <button type="button" aria-label="Maximize" className="w-[17px] border-r border-[#c0b4bb] pl-[3px]"><Glyph kind="max" /></button>
          <button type="button" aria-label="Close" className="w-[29px] bg-[linear-gradient(#e08a78,#c93a20_50%,#d8583c)] pl-[9px]"><Glyph kind="close" /></button>
        </div>
      </header>
      <div className="flex min-h-0 flex-1 flex-col bg-[#f0f0f0]">
        <MenuBar items={["Load", "Options", "Key", "Select", "Help"]} className="h-[14px] shrink-0 gap-[8px] bg-[linear-gradient(#fafbfe,#d6dcee)] pl-[4px] text-black" />
        <div className={`flex flex-col px-[5px] pt-[2px] ${UI}`}>
          <Group title="Driver" left="nurbsCircle1" right={["LEAVES"]} />
          <Group title="Driven" left="blendShape1" right={["Envelope", "LEAVES_4", "LEAVES_3", "LEAVES_2", "LEAVES_1"]} focused />
          <div className="mt-[9px] grid grid-cols-4 gap-px">
            <button type="button" disabled className={`h-[14px] text-[#999] ${RAISED}`}>Key</button>
            {["Load Driver", "Load Driven", "Close"].map((b) => (
              <button type="button" key={b} className={`h-[14px] ${RAISED}`}>{b}</button>
            ))}
          </div>
        </div>
      </div>
    </section>
  );
}

export default function App() {
  return (
    <div className="flex h-screen flex-col overflow-hidden bg-black px-[63px] pt-[7px] pb-[8px] text-[#1c1c1c]">
      <main className="relative flex min-h-0 flex-1 flex-col overflow-hidden bg-[#ededed]">
        <header className="flex h-[14px] shrink-0 items-center bg-[linear-gradient(90deg,#777_0,#8c8a8a_60px,#9a9898_110px,#6f6d6d_160px,#777_200px,#151315_226px,#120f12_340px,#1a181a_640px,#453b42_680px,#302a2f_760px,#0c0a0c_820px,#000_100%)] pl-px pr-[4px]">
          <MayaLogo className="size-[9px]" />
          <h1 className={`ml-[3px] whitespace-pre text-black ${MENU}`}>Autodesk Maya 2009 Unlimited: untitled     ---     blendShape1</h1>
          <div className="ml-auto flex gap-[6px]">
            <button type="button" aria-label="Minimize"><Glyph kind="min" /></button>
            <button type="button" aria-label="Restore"><Glyph kind="max" /></button>
            <button type="button" aria-label="Close" className="ml-[8px] mr-[6px]"><Glyph kind="close" /></button>
          </div>
        </header>
        <div className="h-[13px] shrink-0 bg-[linear-gradient(#fcfcff,#d8dcee)] pl-[3px] text-[#6c6f78]">
          <MenuBar items={["File", "Edit", "Modify", "Create", "Display", "Window", "Assets", "Animate", "Geometry Cache", "Create Deformers", "Edit Deformers", "Skeleton", "Skin", "Constrain", "Character", "Muscle", "Bonus Tools", "Help"]} className="h-full w-[664px] justify-between" />
        </div>
        <StatusLine />
        <Shelf />
        <div className="flex min-h-0 flex-1">
          <ToolBox />
          <Viewport />
          <ChannelBox />
        </div>
        <Timeline />
        <RangeRow />
        <div className={`flex h-[17px] shrink-0 items-stretch border-b border-[#999] pl-[2px] ${UI}`}>
          <Handle />
          <label htmlFor="mel" className="w-[31px] pl-[7px] font-['Open_Sans',sans-serif] text-[8px] font-bold leading-[16px]">MEL</label>
          <input id="mel" className="mt-px min-w-0 flex-1 border-t-2 border-l-2 border-[#777] bg-white" />
          <output className="mt-px min-w-0 flex-1 border-t-2 border-[#666] bg-[#84909a]" />
          <Tool label="Script editor" className="w-[14px]"><Icon className="size-[12px]"><path d="M1 2h14v12H1z" fill="#eee" stroke="#234" strokeWidth="2" /><path d="M2 4h12" stroke="#234" strokeWidth="2" /><path d="M5 8h7v3H5z" fill="#567" /></Icon></Tool>
        </div>
        <div className={`flex h-[13px] shrink-0 items-center pl-[2px] ${UI}`}>
          <Handle />
          <p className="whitespace-pre pl-[9px]">Move Tool: Use manipulator to move object(s).  Use edit mode to change pivot (INSERT).  Ctrl+LMB to move perpendicular.</p>
        </div>
        <BlendShapeWindow />
        <DrivenKeyWindow />
        <svg viewBox="0 0 10 15" className="absolute top-[245px] left-[540px] h-[13px] w-[8px]" aria-hidden="true">
          <path d="M1 1v11l3-2 2 4 2-1-2-4h3z" fill="#fff" stroke="#333" strokeWidth=".8" />
        </svg>
      </main>
    </div>
  );
}
